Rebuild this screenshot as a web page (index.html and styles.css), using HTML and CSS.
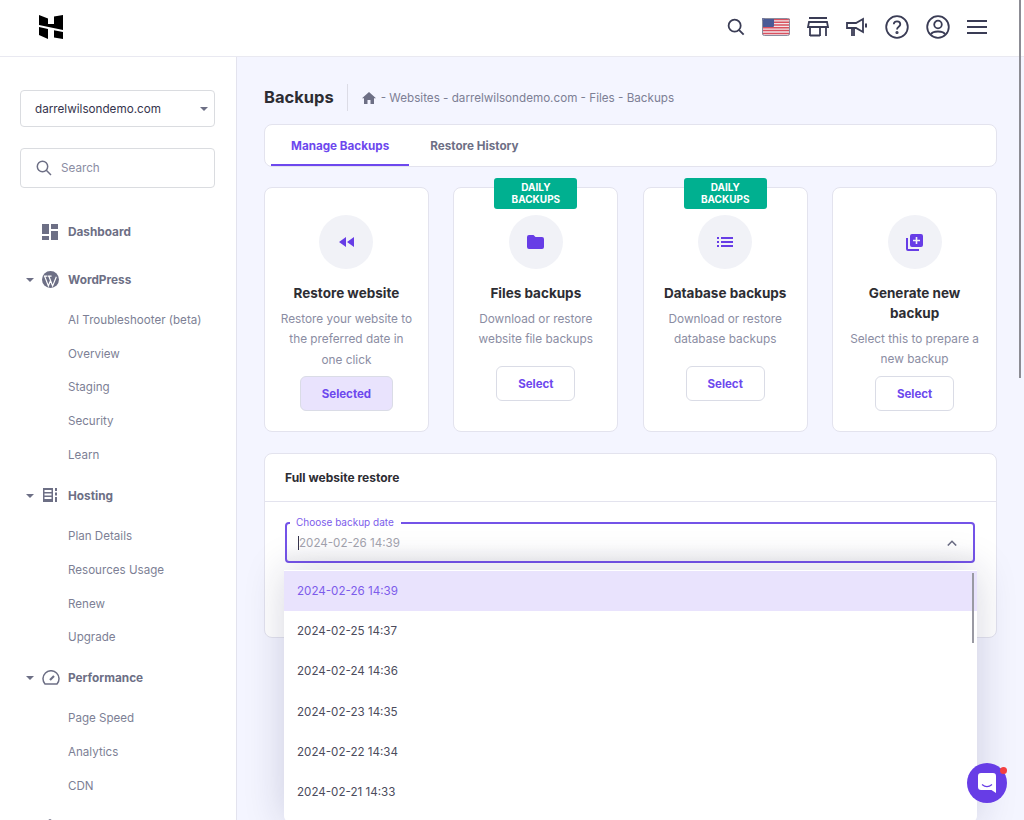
FILE: index.html
```html
<!DOCTYPE html>
<html lang="en">
  <head>
    <meta charset="UTF-8" />
    <meta name="viewport" content="width=device-width, initial-scale=1.0" />
    <title>Backups</title>
    <link rel="stylesheet" href="styles.css">
  </head>
  <body>
    <header class="topbar">
      <svg class="logo" viewBox="0 0 24 24" width="24" height="24" fill="#000">
        <path d="M0 0 L9 3.500 V9 H15 V1.500 L24 0 V15 L0 10 Z"/>
        <path d="M0 12 L9 14 V24 L0 20 Z"/>
        <path d="M15 15.300 L24 17 V24 L15 22.500 Z"/>
      </svg>
      <div class="top_icons">
        <svg class="top_icon" viewBox="0 0 20 20" width="18" height="18" fill="none" stroke="#3a3c55" stroke-width="2"><circle cx="8.500" cy="8.500" r="6.700"/><path d="M13.500 13.500 L18.500 18.500"/></svg>
        <svg class="flag" viewBox="0 0 28 18" width="28" height="18">
          <rect width="28" height="18" rx="2" fill="#f1e7ea"/>
          <path d="M0 1.500H28M0 4.300H28M0 7H28M0 9.800H28M0 12.600H28M0 15.400H28" stroke="#d9505f" stroke-width="1.500"/>
          <rect width="12" height="9" rx="1" fill="#4a5a96"/>
          <rect x="0.500" y="0.500" width="27" height="17" rx="2" fill="none" stroke="#8a8c9e"/>
        </svg>
        <svg class="top_icon" viewBox="0 0 22 20" width="22" height="20" fill="none" stroke="#3a3c55" stroke-width="1.800"><path d="M2 1 H20 M2 5 H20 L21 10 H1 Z M3 10 V19 M19 10 V19 M3 18.500 H13 M13 10 V19"/></svg>
        <svg class="top_icon" viewBox="0 0 22 20" width="22" height="20" fill="none" stroke="#3a3c55" stroke-width="1.800"><path d="M1 6 H10 L17 2 V15 L10 11 H1 Z M6 11 V19 M8 11 V19" /><path d="M20 6.500 V10.500" stroke-width="2"/></svg>
        <svg class="top_icon" viewBox="0 0 24 24" width="24" height="24" fill="none" stroke="#3a3c55" stroke-width="1.800"><circle cx="12" cy="12" r="10.800"/><path d="M8.800 9.300 C8.800 5.300 15.300 5.500 15.300 9.300 C15.300 11.800 12 11.800 12 14.500"/><circle cx="12" cy="17.500" r="0.700"/></svg>
        <svg class="top_icon" viewBox="0 0 24 24" width="24" height="24" fill="none" stroke="#3a3c55" stroke-width="1.800"><circle cx="12" cy="12" r="10.800"/><circle cx="12" cy="9.500" r="3.800"/><path d="M4.800 19.500 C6.500 15.500 17.500 15.500 19.200 19.500"/></svg>
        <svg class="top_icon" viewBox="0 0 20 14" width="20" height="14" fill="none" stroke="#3a3c55" stroke-width="2"><path d="M0 1 H20 M0 7 H20 M0 13 H20"/></svg>
      </div>
    </header>

    <div class="layout">
      <aside class="sidebar">
        <div class="site_select">
          <span>darrelwilsondemo.com</span>
          <span class="small_arrow"></span>
        </div>
        <div class="side_search">
          <svg viewBox="0 0 16 16" width="16" height="16" fill="none" stroke="#6d6f85" stroke-width="1.500"><circle cx="6.500" cy="6.500" r="5.200"/><path d="M10.300 10.300 L15 15"/></svg>
          <span>Search</span>
        </div>

        <nav class="side_nav">
          <div class="nav_group nav_first">
            <div class="nav_head">
              <svg class="nav_icon" viewBox="0 0 16 16" width="16" height="16" fill="#6d6f85"><path d="M0 0H7V10H0ZM9 0H16V5H9ZM9 7H16V16H9ZM0 12H7V16H0Z"/></svg>
              <span>Dashboard</span>
            </div>
          </div>
          <div class="nav_group">
            <div class="nav_head">
              <span class="small_arrow nav_arrow"></span>
              <svg class="nav_icon" viewBox="0 0 16 16" width="17" height="17"><circle cx="8" cy="8" r="8" fill="#6d6f85"/><path d="M2.500 5 L6 14 L8 9 L10 14 L13.500 5.500 M1.800 4.800 H5 M5.500 4.800 H9 M6.500 5 L9.500 13" fill="none" stroke="#fff" stroke-width="1.100"/></svg>
              <span>WordPress</span>
            </div>
            <a class="nav_item">AI Troubleshooter (beta)</a>
            <a class="nav_item">Overview</a>
            <a class="nav_item">Staging</a>
            <a class="nav_item">Security</a>
            <a class="nav_item">Learn</a>
          </div>
          <div class="nav_group">
            <div class="nav_head">
              <span class="small_arrow nav_arrow"></span>
              <svg class="nav_icon" viewBox="0 0 16 16" width="16" height="16" fill="#6d6f85"><path d="M1 1H11V15H1ZM2.500 3V5H9.500V3ZM2.500 6.500V8.500H9.500V6.500ZM2.500 10V12H9.500V10ZM13 1H15V4H13ZM13 5.500H15V8.500H13ZM13 10H15V15H13Z" fill-rule="evenodd"/></svg>
              <span>Hosting</span>
            </div>
            <a class="nav_item">Plan Details</a>
            <a class="nav_item">Resources Usage</a>
            <a class="nav_item">Renew</a>
            <a class="nav_item">Upgrade</a>
          </div>
          <div class="nav_group">
            <div class="nav_head">
              <span class="small_arrow nav_arrow"></span>
              <svg class="nav_icon" viewBox="0 0 18 16" width="18" height="16" fill="none" stroke="#6d6f85" stroke-width="1.500"><path d="M3 14 A8 8 0 1 1 15 14 Z"/><path d="M8 10 L12 6" stroke-width="2.200"/></svg>
              <span>Performance</span>
            </div>
            <a class="nav_item">Page Speed</a>
            <a class="nav_item">Analytics</a>
            <a class="nav_item">CDN</a>
          </div>
          <div class="nav_group">
            <div class="nav_head">
              <svg class="nav_icon" viewBox="0 0 16 16" width="16" height="16" fill="#6d6f85"><path d="M8 1 L15 5 V12 L8 15 L1 12 V5 Z"/></svg>
            </div>
          </div>
        </nav>
      </aside>

      <main class="content">
        <div class="page_title">
          <h1>Backups</h1>
          <div class="crumbs">
            <svg viewBox="0 0 14 12" width="14" height="12" fill="#6d6f85"><path d="M7 0 L14 6.300 H12 V12 H8.500 V8 H5.500 V12 H2 V6.300 H0 Z"/></svg>
            <span>- Websites - darrelwilsondemo.com - Files - Backups</span>
          </div>
        </div>

        <div class="tabs">
          <a class="tab tab_active">Manage Backups</a>
          <a class="tab">Restore History</a>
        </div>

        <div class="cards">
          <div class="card">
            <div class="circle">
              <svg viewBox="0 0 15 10" width="15" height="10" fill="#673de6"><path d="M7 0 V10 L0 5 Z M15 0 V10 L8 5 Z"/></svg>
            </div>
            <h3>Restore website</h3>
            <p>Restore your website to the preferred date in one click</p>
            <a class="btn btn_selected">Selected</a>
          </div>
          <div class="card card_short">
            <span class="badge">DAILY BACKUPS</span>
            <div class="circle">
              <svg viewBox="0 0 17 14" width="17" height="14" fill="#673de6"><path d="M2 0 H6.500 L8.500 2 H15 A2 2 0 0 1 17 4 V12 A2 2 0 0 1 15 14 H2 A2 2 0 0 1 0 12 V2 A2 2 0 0 1 2 0 Z"/></svg>
            </div>
            <h3>Files backups</h3>
            <p>Download or restore website file backups</p>
            <a class="btn">Select</a>
          </div>
          <div class="card card_short">
            <span class="badge">DAILY BACKUPS</span>
            <div class="circle">
              <svg viewBox="0 0 16 10" width="16" height="10" fill="#673de6"><path d="M0 0H2V2H0ZM0 4H2V6H0ZM0 8H2V10H0ZM4 0H16V2H4ZM4 4H16V6H4ZM4 8H16V10H4Z"/></svg>
            </div>
            <h3>Database backups</h3>
            <p>Download or restore database backups</p>
            <a class="btn">Select</a>
          </div>
          <div class="card">
            <div class="circle">
              <svg viewBox="0 0 17 17" width="17" height="17" fill="#673de6"><path d="M0 4 H2 V15 H13 V17 H2 A2 2 0 0 1 0 15 Z"/><path d="M6 0 H15 A2 2 0 0 1 17 2 V11 A2 2 0 0 1 15 13 H6 A2 2 0 0 1 4 11 V2 A2 2 0 0 1 6 0 Z M9.700 3 V5.700 H7 V7.300 H9.700 V10 H11.300 V7.300 H14 V5.700 H11.300 V3 Z" fill-rule="evenodd"/></svg>
            </div>
            <h3>Generate new backup</h3>
            <p>Select this to prepare a new backup</p>
            <a class="btn">Select</a>
          </div>
        </div>

        <section class="restore">
          <div class="restore_head">Full website restore</div>
          <div class="restore_body">
            <div class="date_field">
              <span class="date_label">Choose backup date</span>
              <span class="date_value">2024-02-26 14:39</span>
              <svg viewBox="0 0 10 6" width="10" height="6" fill="none" stroke="#6d6f85" stroke-width="1.600"><path d="M0.800 5.500 L5 1.300 L9.200 5.500"/></svg>
            </div>
            <ul class="date_list">
              <li class="date_on">2024-02-26 14:39</li>
              <li>2024-02-25 14:37</li>
              <li>2024-02-24 14:36</li>
              <li>2024-02-23 14:35</li>
              <li>2024-02-22 14:34</li>
              <li>2024-02-21 14:33</li>
            </ul>
          </div>
        </section>
      </main>
    </div>

    <div class="page_scroll"></div>
    <div class="chat_btn">
      <svg viewBox="0 0 18 20" width="18" height="20"><path d="M3 0 H15 A3 3 0 0 1 18 3 V20 L13.500 17 H3 A3 3 0 0 1 0 14 V3 A3 3 0 0 1 3 0 Z" fill="#fff"/><path d="M4 11.500 C7 14 11 14 14 11.500" fill="none" stroke="#673de6" stroke-width="1.200"/></svg>
      <span class="chat_dot"></span>
    </div>
  </body>
</html>
```

FILE: styles.css
```css
* {
  box-sizing: border-box;
}
html,
body {
  height: 820px;
  overflow: hidden;
}
body {
  margin: 0;
  font-family: "Inter", "Liberation Sans", sans-serif;
  background-color: #f4f5ff;
  color: #2f1c6a;
}
h1,
h3,
p,
ul {
  margin: 0;
  padding: 0;
}

/* top bar */
.topbar {
  height: 57px;
  background-color: #fff;
  border-bottom: 1px solid #e9e9f1;
  display: flex;
  align-items: center;
  justify-content: space-between;
  padding: 0 37px 3px 39px;
}
.logo {
  display: block;
}
.top_icons {
  display: flex;
  align-items: center;
  gap: 17px;
}
.top_icon,
.flag {
  display: block;
}

.layout {
  display: flex;
  height: 763px;
}

/* sidebar */
.sidebar {
  width: 237px;
  flex: none;
  background-color: #fff;
  border-right: 1px solid #e3e3ee;
  padding: 33px 21px 0 20px;
  overflow: hidden;
}
.site_select,
.side_search {
  background-color: #fff;
  border: 1px solid #dadce0;
  border-radius: 4px;
  display: flex;
  align-items: center;
}
.site_select {
  height: 37px;
  padding: 1px 6px 0 14px;
  justify-content: space-between;
  font-size: 11.700px;
  color: #36344d;
}
.small_arrow {
  width: 0;
  height: 0;
  border-left: 4.500px solid transparent;
  border-right: 4.500px solid transparent;
  border-top: 4.500px solid #6d6f85;
}
.side_search {
  height: 40px;
  margin-top: 21px;
  padding-left: 15px;
  gap: 9px;
  font-size: 11.700px;
  color: #8b8da3;
}
.side_nav {
  margin-top: 34px;
}
.nav_group {
  margin-top: 20.600px;
}
.nav_first {
  margin-top: 0;
  margin-bottom: 27.500px;
}
.nav_head {
  position: relative;
  height: 20px;
  padding-left: 48px;
  display: flex;
  align-items: center;
  font-size: 11.800px;
  font-weight: 700;
  color: #6d6f85;
}
.nav_head .nav_icon {
  position: absolute;
  left: 22px;
  top: 1.500px;
}
.nav_arrow {
  position: absolute;
  left: 6px;
  top: 8px;
}
.nav_item {
  display: block;
  height: 20px;
  line-height: 20px;
  margin-top: 13.800px;
  padding-left: 48px;
  font-size: 11.600px;
  color: #7d7f95;
}
.nav_head + .nav_item {
  margin-top: 20.400px;
}

/* main column */
.content {
  flex: 1;
  min-width: 0;
  padding: 27px 27px 0 27px;
}
.page_title {
  display: flex;
  align-items: center;
  height: 27px;
}
.page_title h1 {
  font-size: 16.500px;
  font-weight: 700;
  color: #2d2d33;
  padding-right: 13px;
  border-right: 1px solid #dcdce6;
  line-height: 27px;
}
.crumbs {
  display: flex;
  align-items: center;
  gap: 5px;
  padding-left: 14px;
  font-size: 11.660px;
  color: #7d7f95;
}
.tabs {
  height: 43px;
  margin-top: 13px;
  background-color: #fff;
  border: 1px solid #e3e3ee;
  border-radius: 8px;
  display: flex;
  padding-left: 6px;
}
.tab {
  height: 41px;
  padding: 0 20px;
  display: flex;
  align-items: center;
  font-size: 11.700px;
  font-weight: 700;
  color: #6d6f85;
}
.tab_active {
  color: #6d48ee;
  box-shadow: inset 0 -2px 0 #6d48ee;
  margin-right: 1px;
}
.cards {
  display: grid;
  grid-template-columns: repeat(4, 1fr);
  gap: 24.500px;
  margin-top: 20px;
}
.card {
  position: relative;
  height: 245px;
  background-color: #fff;
  border: 1px solid #e3e3ee;
  border-radius: 8px;
  padding: 27px 14px 0;
  display: flex;
  flex-direction: column;
  align-items: center;
  text-align: center;
}
.circle {
  width: 54px;
  height: 54px;
  flex: none;
  border-radius: 50%;
  background-color: #f1f2f7;
  display: flex;
  align-items: center;
  justify-content: center;
}
.card h3 {
  font-size: 13.500px;
  font-weight: 700;
  line-height: 20px;
  color: #2d2d33;
  margin-top: 14px;
}
.card p {
  font-size: 11.800px;
  line-height: 20.300px;
  color: #8b8da3;
  margin-top: 6px;
}
.btn {
  height: 35px;
  margin-top: 6px;
  padding: 1px 21px 0;
  display: flex;
  align-items: center;
  background-color: #fff;
  border: 1px solid #dadce6;
  border-radius: 6px;
  font-size: 11.500px;
  font-weight: 700;
  color: #6d48ee;
}
.card_short .btn {
  margin-top: 16px;
}
.btn_selected {
  background-color: #e9e3fd;
}
.badge {
  position: absolute;
  top: -10px;
  left: 40px;
  width: 83px;
  height: 31px;
  padding-top: 4px;
  background-color: #00b090;
  border-radius: 3px;
  color: #fff;
  font-size: 10px;
  font-weight: 700;
  line-height: 11.500px;
  word-spacing: 30px;
}

/* restore panel */
.restore {
  height: 185px;
  margin-top: 21px;
  background-color: #fff;
  border: 1px solid #e3e3ee;
  border-radius: 8px;
}
.restore_head {
  height: 48px;
  line-height: 48px;
  padding-left: 20px;
  border-bottom: 1px solid #e3e3ee;
  font-size: 12px;
  font-weight: 700;
  color: #2d2d33;
}
.restore_body {
  position: relative;
  padding: 20px 21px 0 20px;
}
.date_field {
  position: relative;
  height: 41px;
  background: linear-gradient(#fff 55%, #f4f4f5);
  border: 2px solid #7453e8;
  border-radius: 4px;
  display: flex;
  align-items: center;
  justify-content: space-between;
  padding: 0 16px 0 11px;
}
.date_label {
  position: absolute;
  top: -8px;
  left: 3px;
  padding: 0 7px 0 6px;
  background-color: #fff;
  font-size: 10px;
  line-height: 12px;
  color: #7c5ceb;
}
.date_value {
  font-size: 11.600px;
  color: #a3a3ad;
  border-left: 1px solid #36344d;
}
.date_list {
  position: absolute;
  top: 68px;
  left: 19px;
  width: 693px;
  height: 252px;
  padding-top: 0.500px;
  list-style: none;
  background-color: #fff;
  border-radius: 0 0 6px 6px;
  box-shadow: 0 0 40px rgba(29, 30, 80, 0.18);
}
.date_list li {
  height: 40.400px;
  line-height: 40.400px;
  padding-left: 13px;
  font-size: 11.600px;
  color: #4b4b5c;
}
.date_list .date_on {
  background-color: #e9e3fd;
  color: #7c5ceb;
}
.date_list::after {
  content: "";
  position: absolute;
  top: 3px;
  right: 3px;
  width: 2px;
  height: 70px;
  background-color: #9a9aa3;
}

/* things floating over the page */
.page_scroll {
  position: absolute;
  top: 0;
  left: 1019px;
  width: 2px;
  height: 378px;
  background-color: #8c8c94;
}
.chat_btn {
  position: absolute;
  top: 763px;
  left: 967px;
  width: 40px;
  height: 40px;
  border-radius: 50%;
  background-color: #673de6;
  display: flex;
  align-items: center;
  justify-content: center;
}
.chat_dot {
  position: absolute;
  top: 4px;
  right: 0;
  width: 7px;
  height: 7px;
  border-radius: 50%;
  background-color: #f43f3f;
}
```
